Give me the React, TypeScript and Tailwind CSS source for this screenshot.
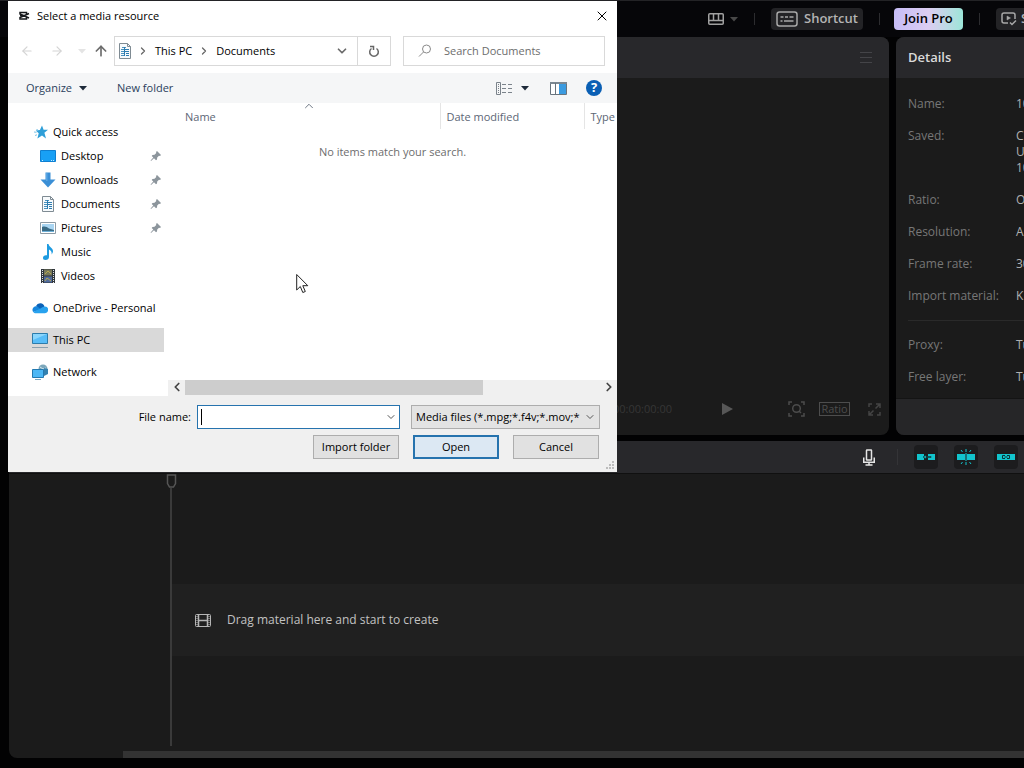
import { ReactNode } from 'react';
import { ArrowLeft, ArrowRight, ArrowUp, ChevronDown, ChevronRight, ChevronLeft, ChevronUp, X } from 'lucide-react';

const DocIcon = () => (
  <svg width="16" height="16" viewBox="0 0 16 16" fill="none">
    <path d="M2.500.500h8l3 3v12h-11z" fill="#f7fafc" stroke="#7f8b93" />
    <path d="M10.500.500v3h3" stroke="#7f8b93" />
    <path d="M4 6.500h3M4 8.500h3M4 10.500h3M4 12.500h3M5 4.500h4" stroke="#4a92be" />
    <path d="M8 6.500h4M8 8.500h4M9 10.500h3M9 12.500h3M7.500 4v9" stroke="#2c7cb0" />
  </svg>
);

const StarIcon = () => (
  <svg width="16" height="16" viewBox="0 0 16 16">
    <path d="M9 1.500l1.600 4.300h4.400l-3.600 3 1.600 5.700-4-3-4.600 3 1.300-5.200-3-2.800 4.200-.5z" fill="#2f9fd8" />
    <path d="M1 8l2.500.3M2 11.500l2-.7M3.500 5.500l1.500.5" stroke="#7cc4e8" />
  </svg>
);

const DesktopIcon = () => (
  <svg width="16" height="16" viewBox="0 0 16 16">
    <path d="M.5 2.500h15v11H.5z" fill="#18a0f5" stroke="#0f7fd0" />
    <path d="M2 12.500h1M11 12.500h1M13 12.500h1" stroke="#c8e9ff" />
  </svg>
);

const DownloadIcon = () => (
  <svg width="16" height="16" viewBox="0 0 16 16">
    <path d="M5.500.5h5v7h5L8 15.500.5 7.500h5z" fill="#3b8fd6" />
    <path d="M6 1h1.500v8H6z" fill="#5aa6e3" />
  </svg>
);

const PictureIcon = () => (
  <svg width="16" height="16" viewBox="0 0 16 16">
    <path d="M.5 2.500h15v11H.5z" fill="#fff" stroke="#8d9ba5" />
    <path d="M2 4h12v8H2z" fill="#a9d5f2" />
    <path d="M2 7c3-1 5 0 7 1.500l5 1.500v2H2z" fill="#3a6b85" />
    <path d="M2 11h12v1H2z" fill="#6eb0d8" />
  </svg>
);

const MusicIcon = () => (
  <svg width="16" height="16" viewBox="0 0 16 16">
    <path d="M7 0h1.500c.5 3 4.500 4 4.500 7 0 1.500-.7 2.500-1.500 3.500.6-2.500-.5-4-2.500-5V13c0 1.700-1.500 3-3.500 3S3 15 3 13.700s1.300-2.500 3-2.500h1z" fill="#1e9be0" />
  </svg>
);

const VideoIcon = () => (
  <svg width="16" height="16" viewBox="0 0 16 16">
    <path d="M1 1h14v14H1z" fill="#30363c" />
    <path d="M4 1.500h8v6H4z" fill="#77785a" />
    <path d="M4 8.500h8v6H4z" fill="#516b9c" />
    <path d="M5 6l3-3 3 3M5 13l2-3 4 3" stroke="#b5a94f" fill="none" />
    <path d="M2.500 2v13M13.500 2v13" stroke="#dfe3e6" strokeDasharray="1 1" />
  </svg>
);

const CloudIcon = () => (
  <svg width="16" height="16" viewBox="0 0 16 16">
    <path d="M4 6a4.500 4.500 0 0 1 8.500.6L8 10z" fill="#0b62b8" />
    <path d="M3.500 6.200A3.700 3.700 0 0 0 1.200 12L9 9.500 5.500 6.600a4 4 0 0 0-2-.4z" fill="#1787dd" />
    <path d="M1.200 12c.6.900 1.600 1.200 2.500 1.200h9a3.300 3.300 0 0 0 .3-6.600c-2 0-3 1-4.500 2z" fill="#28a2ee" />
  </svg>
);

const PcIcon = () => (
  <svg width="16" height="16" viewBox="0 0 16 16">
    <path d="M.5 1.500h15v10H.5z" fill="#58bdf8" stroke="#2d7cab" />
    <path d="M1 8l14-6H1z" fill="#8bd6fc" />
    <path d="M0 15.500h16" stroke="#8aa0ae" />
  </svg>
);

const NetworkIcon = () => (
  <svg width="16" height="16" viewBox="0 0 16 16">
    <circle cx="11" cy="5" r="4.500" fill="#7ca7bb" />
    <path d="M8 3l3 2 3-1M9 8l4-2" stroke="#d3e8ef" fill="none" />
    <path d="M12 4l4 1v5l-4 2z" fill="#3381b0" />
    <path d="M.5 5.500h11v8H.5z" fill="#4cb7f5" stroke="#2379b0" />
    <path d="M3 15.500h6" stroke="#7aa9c4" />
  </svg>
);

const PinIcon = () => (
  <svg width="12" height="12" viewBox="0 0 12 12">
    <path d="M7 1l4 4-1 1-1-.3L7.200 7.500 7 9.500l-1 .8L4 8.300 1 11l-.4-.4L3.300 7.600 1.700 6l.8-1 2-.2L6.300 3 6 2z" fill="#8c959c" />
  </svg>
);

const LogoIcon = () => (
  <svg width="14" height="14" viewBox="0 0 14 14" fill="none" stroke="#16181b" strokeWidth="1.500">
    <path d="M9.500 5V3.500H3V5l9 4M9.500 8.500V10H3V8.500l9-4" />
    <path d="M3 6.700h5" />
  </svg>
);

const Caret = ({ color = '#1e2a3a' }: { color?: string }) => (
  <svg width="8" height="5" viewBox="0 0 8 5"><path d="M0 0h8L4 4.500z" fill={color} /></svg>
);

type NavItem = { label: string; icon: ReactNode; pinned?: boolean };

const quickItems: NavItem[] = [
  { label: 'Desktop', icon: <DesktopIcon />, pinned: true },
  { label: 'Downloads', icon: <DownloadIcon />, pinned: true },
  { label: 'Documents', icon: <DocIcon />, pinned: true },
  { label: 'Pictures', icon: <PictureIcon />, pinned: true },
  { label: 'Music', icon: <MusicIcon /> },
  { label: 'Videos', icon: <VideoIcon /> },
];

const rootItems: NavItem[] = [
  { label: 'OneDrive - Personal', icon: <CloudIcon /> },
  { label: 'This PC', icon: <PcIcon /> },
  { label: 'Network', icon: <NetworkIcon /> },
];

const details = [
  { label: 'Name:', value: ['10'] },
  { label: 'Saved:', value: ['C:', 'U', '10'] },
  { label: 'Ratio:', value: ['O'] },
  { label: 'Resolution:', value: ['A'] },
  { label: 'Frame rate:', value: ['30'] },
  { label: 'Import material:', value: ['K'] },
];

const moreDetails = [
  { label: 'Proxy:', value: ['Tu'] },
  { label: 'Free layer:', value: ['Tu'] },
];

function FileDialog() {
  return (
    <div role="dialog" aria-label="Select a media resource" className="absolute left-2 top-px flex w-[609px] flex-col overflow-hidden bg-white font-['Open_Sans',sans-serif] text-[11px] text-black">
      {/* Title */}
      <div className="flex h-[30px] items-center gap-1.5 pl-[9px] pr-[7px]">
        <LogoIcon />
        <span className="flex-1">Select a media resource</span>
        <button aria-label="Close"><X size={16} strokeWidth={1.5} /></button>
      </div>

      {/* Address bar */}
      <div className="flex h-10 items-center px-3">
        <button aria-label="Back" className="text-[#d4d4d4]"><ArrowLeft size={14} /></button>
        <button aria-label="Forward" className="ml-4 text-[#d4d4d4]"><ArrowRight size={14} /></button>
        <button aria-label="Recent" className="ml-3.5"><Caret color="#e4e4e4" /></button>
        <button aria-label="Up" className="ml-[7px] text-[#6d6d6d]"><ArrowUp size={16} strokeWidth={2.5} /></button>
        <div className="ml-[5px] flex h-[30px] w-[277px] border border-[#d9d9d9]">
          <div className="flex flex-1 items-center pl-0.5">
            <DocIcon />
            <ChevronRight size={12} strokeWidth={2.5} className="ml-1 text-[#666]" />
            <button className="ml-1.5">This PC</button>
            <ChevronRight size={12} strokeWidth={2.5} className="mx-1.5 text-[#666]" />
            <button>Documents</button>
            <button aria-label="History" className="ml-auto mr-2 text-[#6b6b6b]"><ChevronDown size={14} strokeWidth={3} /></button>
          </div>
          <button aria-label="Refresh" className="flex w-[33px] items-center justify-center border-l border-[#d9d9d9]">
            <svg width="12" height="13" viewBox="0 0 12 13" fill="none" stroke="#666" strokeWidth="1.500"><path d="M3.500 3.500a4.300 4.300 0 1 0 5 0" /><path d="M2 1.500h3.500V5" /></svg>
          </button>
        </div>
        <label className="ml-3 flex h-[30px] flex-1 items-center border border-[#d9d9d9] pl-3.5">
          <svg width="14" height="14" viewBox="0 0 14 14" fill="none" stroke="#8a8a8a"><circle cx="8.500" cy="5" r="4" /><path d="M5.500 8L1 12.500" /></svg>
          <input type="text" aria-label="Search" placeholder="Search Documents" className="ml-3 min-w-0 flex-1 outline-none placeholder:text-[#6d6d6d]" />
        </label>
      </div>

      {/* Commands */}
      <div className="mt-0.5 flex h-[30px] items-center bg-[#f5f6f7] pl-[18px] pr-[15px] text-[#2b3f5c]">
        <button className="flex w-[61px] items-center justify-between">Organize <Caret /></button>
        <button className="ml-[30px]">New folder</button>
        <button aria-label="Change view" className="ml-auto flex items-center gap-2">
          <svg width="17" height="13" viewBox="0 0 17 13" fill="none" stroke="#7b838b">
            <path d="M.5.5h4v12h-4z" />
            <path d="M2.500 2v10" strokeDasharray="1 1" />
            <path d="M6 2.500h5M12 2.500h5M6 6.500h5M12 6.500h5M6 10.500h5M12 10.500h5" strokeDasharray="4 1" />
          </svg>
          <Caret />
        </button>
        <button aria-label="Preview pane" className="ml-[21px]">
          <svg width="17" height="13" viewBox="0 0 17 13"><path d="M.5.5h16v12H.5z" fill="#fff" stroke="#68747e" /><path d="M0 0h17v2H0z" fill="#7b8791" /><path d="M5.500 1v12" stroke="#68747e" /><path d="M9 2h7v10H9z" fill="#3b9be0" /></svg>
        </button>
        <button aria-label="Help" className="ml-[19px] flex size-4 items-center justify-center rounded-full bg-[#0a5fb4] text-[13px] font-bold text-white">?</button>
      </div>

      {/* Content */}
      <div className="flex h-[293px]">
        <nav className="flex w-40 flex-col gap-2 pr-1 pt-[17px]">
          <div>
            <a href="#" className="flex h-6 items-center gap-1 pl-[25px]"><StarIcon />Quick access</a>
            {quickItems.map((item) => (
              <a key={item.label} href="#" className="flex h-6 items-center gap-[5px] pl-8 pr-0.5">
                {item.icon}
                <span className="flex-1">{item.label}</span>
                {item.pinned && <PinIcon />}
              </a>
            ))}
          </div>
          {rootItems.map((item) => (
            <a key={item.label} href="#" className={`flex h-6 shrink-0 items-center gap-[5px] whitespace-nowrap pl-6 ${item.label === 'This PC' ? 'bg-[#d9d9d9]' : ''}`}>
              {item.icon}
              {item.label}
            </a>
          ))}
        </nav>
        <div className="flex min-w-0 flex-1 flex-col">
          <table className="w-full table-fixed text-left text-[#5c6675]">
            <thead>
              <tr className="h-[26px]">
                <th className="relative w-[272px] border-r border-[#e5e5e5] pl-[17px] pt-0.5 font-normal">
                  Name
                  <ChevronUp size={14} strokeWidth={1.5} className="absolute -top-1 left-[134px]" />
                </th>
                <th className="w-36 border-r border-[#e5e5e5] pl-1.5 pt-0.5 font-normal">Date modified</th>
                <th className="pl-1.5 pt-0.5 font-normal">Type</th>
              </tr>
            </thead>
          </table>
          <p className="flex-1 pt-[15px] text-center text-[#6d6d6d]">No items match your search.</p>
          <div className="flex h-4 items-start bg-[#f0f0f0] text-[#444]">
            <button aria-label="Scroll left" className="w-[17px] pl-0.5"><ChevronLeft size={14} strokeWidth={3} /></button>
            <div className="h-[15px] w-[298px] bg-[#cdcdcd]" />
            <button aria-label="Scroll right" className="ml-auto pr-px"><ChevronRight size={14} strokeWidth={3} /></button>
          </div>
        </div>
      </div>

      {/* Footer */}
      <div className="relative flex flex-col gap-1.5 bg-[#f0f0f0] pb-[13px] pr-[17px] pt-[9px]">
        <div className="flex items-center justify-end">
          <label htmlFor="filename" className="mr-1.5">File name:</label>
          <div className="flex h-6 w-[203px] items-center border border-[#2673ae] bg-white pl-[3px] pr-0.5">
            <span className="h-4 w-px bg-black" />
            <input id="filename" type="text" className="min-w-0 flex-1 outline-none" />
            <button aria-label="Show names"><ChevronDown size={12} strokeWidth={2} className="text-[#555]" /></button>
          </div>
          <div className="relative ml-[11px] w-[189px]">
            <select aria-label="File type" className="h-6 w-full appearance-none border border-[#adadad] bg-[#e3e3e3] pl-1 pr-[18px] outline-none">
              <option>Media files (*.mpg;*.f4v;*.mov;*</option>
            </select>
            <ChevronDown size={12} strokeWidth={2} className="pointer-events-none absolute right-1 top-1.5 text-[#555]" />
          </div>
        </div>
        <div className="mr-px flex justify-end gap-3.5">
          <button className="h-6 w-[86px] border border-[#adadad] bg-[#e1e1e1]">Import folder</button>
          <button className="h-6 w-[86px] border-2 border-[#2673ae] bg-[#dce8f3]">Open</button>
          <button className="h-6 w-[86px] border border-[#adadad] bg-[#e1e1e1]">Cancel</button>
        </div>
        <svg width="10" height="10" viewBox="0 0 10 10" className="absolute bottom-0.5 right-0.5" fill="#bcbcbc">
          <path d="M7 1h2v2H7zM4 4h2v2H4zM7 4h2v2H7zM1 7h2v2H1zM4 7h2v2H4zM7 7h2v2H7z" />
        </svg>
      </div>

      <svg width="13" height="21" viewBox="0 0 13 21" className="absolute left-[288px] top-[272px]">
        <path d="M.7 1.500v15.500l3.600-3.500 2.500 6 2.500-1-2.500-5.800h5z" fill="#fff" stroke="#222" />
      </svg>
    </div>
  );
}

function TopBar() {
  return (
    <header className="flex h-[37px] shrink-0 items-center justify-end border-t border-[#232326] bg-[#060609] text-[13px] font-semibold text-[#b4b4b4]">
      <button aria-label="Layout" className="flex items-center gap-1.5">
        <svg width="16" height="12" viewBox="0 0 16 12" fill="none" stroke="#a0a0a0" strokeWidth="1.500"><rect x=".75" y=".75" width="14.500" height="10.500" rx="1" /><path d="M1 7.500h14M5.500 1v6M10.500 1v6" /></svg>
        <Caret color="#484848" />
      </button>
      <span className="mx-4 h-3 w-px bg-[#2c2c2f]" />
      <button className="flex h-[22px] w-[92px] items-center justify-center gap-1.5 rounded bg-[#232326]">
        <svg width="22" height="16" viewBox="0 0 22 16" fill="none" stroke="#a8a8a8" strokeWidth="1.500"><rect x="1" y="1" width="20" height="14" rx="2.500" /><path d="M4.500 6h3M9 6h3M13.500 6h4M4.500 10h2M8 10h9.500" /></svg>
        Shortcut
      </button>
      <span className="ml-4 mr-3.5 h-3 w-px bg-[#2c2c2f]" />
      <button className="h-[22px] w-[69px] rounded bg-linear-to-r from-[#c7bdf7] via-[#dccdf2] to-[#9be5d8] text-black">Join Pro</button>
      <span className="mx-4 h-3 w-px bg-[#2c2c2f]" />
      <button className="flex h-[22px] w-7 items-center gap-1 overflow-hidden rounded-l bg-[#232326] pl-[5px]">
        <svg width="16" height="14" viewBox="0 0 16 14" fill="none" stroke="#a8a8a8" strokeWidth="1.500" className="shrink-0"><path d="M7 11H3a2 2 0 0 1-2-2V3a2 2 0 0 1 2-2h9a2 2 0 0 1 2 2v4M9 10.500l2 2 4-4" /><path d="M6 4v4l3.500-2z" fill="#a8a8a8" strokeWidth=".5" /></svg>
        S
      </button>
    </header>
  );
}

function DetailRow({ label, value }: { label: string; value: string[] }) {
  return (
    <div className="flex leading-4">
      <dt className="w-[108px] shrink-0 text-[#777]">{label}</dt>
      <dd className="text-[#b0b0b0]">
        {value.map((line) => <div key={line}>{line}</div>)}
      </dd>
    </div>
  );
}

function Preview() {
  return (
    <section className="flex min-w-0 flex-1 flex-col rounded-lg bg-[#1b1b1b]">
      <div className="flex h-[41px] items-center justify-end rounded-t-lg bg-[#28282b] pr-[17px]">
        <button aria-label="Menu"><svg width="12" height="11" viewBox="0 0 12 11" stroke="#444448"><path d="M0 .5h12M0 5.500h12M0 10.500h12" /></svg></button>
      </div>
      <div className="flex-1" />
      <div className="flex h-[52px] items-center justify-end pr-2 text-[11px] text-[#363636]">
        <span className="mr-[50px]">00:00:00:00</span>
        <button aria-label="Play" className="mr-[55px]"><svg width="11" height="12" viewBox="0 0 11 12"><path d="M0 0l11 6-11 6z" fill="#575757" /></svg></button>
        <button aria-label="Zoom preview" className="mr-3.5">
          <svg width="17" height="16" viewBox="0 0 17 16" fill="none" stroke="#4c4c4c" strokeWidth="1.500"><path d="M1 4V1h3M13 1h3v3M1 12v3h3M13 15h3v-3" /><circle cx="8.500" cy="7.500" r="3.800" /><path d="M11 10l2 2" /></svg>
        </button>
        <button className="mr-[18px] h-3.5 w-[31px] border border-[#4d4d4d] leading-3 text-[#4d4d4d]">Ratio</button>
        <button aria-label="Full screen">
          <svg width="13" height="13" viewBox="0 0 13 13" fill="none" stroke="#444" strokeWidth="1.500"><path d="M1 4V1h3M8 1h4v4M1 8v4h4M9 12h3V9M12 1L7.500 5.500M1 12l4.500-4.500" /></svg>
        </button>
      </div>
    </section>
  );
}

function Details() {
  return (
    <aside className="flex w-32 shrink-0 flex-col overflow-hidden rounded-l-lg bg-[#1b1b1b] text-xs">
      <h2 className="flex h-[41px] shrink-0 items-center bg-[#28282b] pl-3 text-[13px] font-semibold text-[#dadada]">Details</h2>
      <dl className="ml-3 flex flex-1 flex-col gap-4 whitespace-nowrap pt-[18px]">
        {details.map((row) => <DetailRow key={row.label} {...row} />)}
        <div className="h-px bg-[#2a2a2a]" />
        {moreDetails.map((row) => <DetailRow key={row.label} {...row} />)}
      </dl>
      <div className="h-[37px] shrink-0 border-t border-[#141414] bg-[#262628]" />
    </aside>
  );
}

const toolIcons = [
  {
    label: 'Main track magnet',
    art: <><path d="M0 3h7v6H0zM11 3h7v6h-7z" fill="#12c4cd" /><path d="M6 6l3-2v1.500h5v1H9V8z" fill="#12c4cd" stroke="#10292b" strokeWidth=".7" /></>,
  },
  {
    label: 'Auto snapping',
    art: <><path d="M0 3h8v6H0zM10 3h8v6h-8z" fill="#12c4cd" /><path d="M9 2v8M9 1v-3M5.500 1L4-1M12.500 1L14-1M9 11v3M5.500 11L4 13M12.500 11l1.500 2" stroke="#12c4cd" /></>,
  },
  {
    label: 'Linkage',
    art: <><path d="M0 3h18v6H0z" fill="#12c4cd" /><path d="M8 4.500H5.500v3H8M10 4.500h2.500v3H10M7.500 6h3" stroke="#0b3336" fill="none" /></>,
  },
];

function Timeline() {
  return (
    <section className="ml-[9px] flex shrink-0 flex-col overflow-hidden rounded-bl-lg bg-[#1b1b1b]">
      <div className="flex h-[33px] items-center justify-end border-b border-[#101010] bg-[#28282b] pr-1.5">
        <button aria-label="Record">
          <svg width="12" height="17" viewBox="0 0 12 17" fill="none" stroke="#e6e6e6" strokeWidth="1.500"><rect x="3.500" y="1" width="5" height="10" rx=".5" /><path d="M.75 8.500v4.750h10.500V8.500M6 13v3M2.500 16h7" /></svg>
        </button>
        <span className="ml-[22px] mr-4 h-4 w-px bg-[#343437]" />
        <div className="flex gap-4">
          {toolIcons.map((tool) => (
            <button key={tool.label} aria-label={tool.label} className="flex size-6 items-center justify-center rounded bg-[#1c1c1e]">
              <svg width="18" height="12" viewBox="0 0 18 12" overflow="visible">{tool.art}</svg>
            </button>
          ))}
        </div>
      </div>
      <div className="relative flex h-[277px] flex-col justify-center pl-[163px] pt-[15px]">
        <div className="flex h-[72px] items-center gap-4 bg-[#202020] pl-[23px] text-xs text-[#c2c2c2]">
          <svg width="16" height="13" viewBox="0 0 16 13" fill="none" stroke="#b5b5b5"><rect x=".5" y=".5" width="15" height="12" rx="1" /><path d="M3.500 1v11M12.500 1v11M4 6.500h8" strokeWidth="1.500" /><path d="M2 2v10M14 2v10" strokeDasharray="1 1" /></svg>
          <span>Drag material here and start to create</span>
        </div>
        <svg width="11" height="14" viewBox="0 0 11 14" fill="none" stroke="#565656" strokeWidth="1.500" className="absolute left-[157px] top-0"><path d="M1.500 1h8v8.500L7.500 13h-4l-2-3.500z" /></svg>
        <div className="absolute bottom-[5px] left-[161px] top-3.5 w-0.5 bg-[#3a3a3a]" />
      </div>
      <div className="ml-[114px] h-[7px] bg-[#333]" />
    </section>
  );
}

export default function App() {
  return (
    <div className="relative flex h-screen flex-col overflow-hidden bg-[#020203] pb-2.5 font-['Open_Sans',sans-serif]">
      <TopBar />
      <main className="mb-1.5 flex min-h-0 flex-1 gap-[7px] pl-2">
        <Preview />
        <Details />
      </main>
      <Timeline />
      <FileDialog />
    </div>
  );
}
